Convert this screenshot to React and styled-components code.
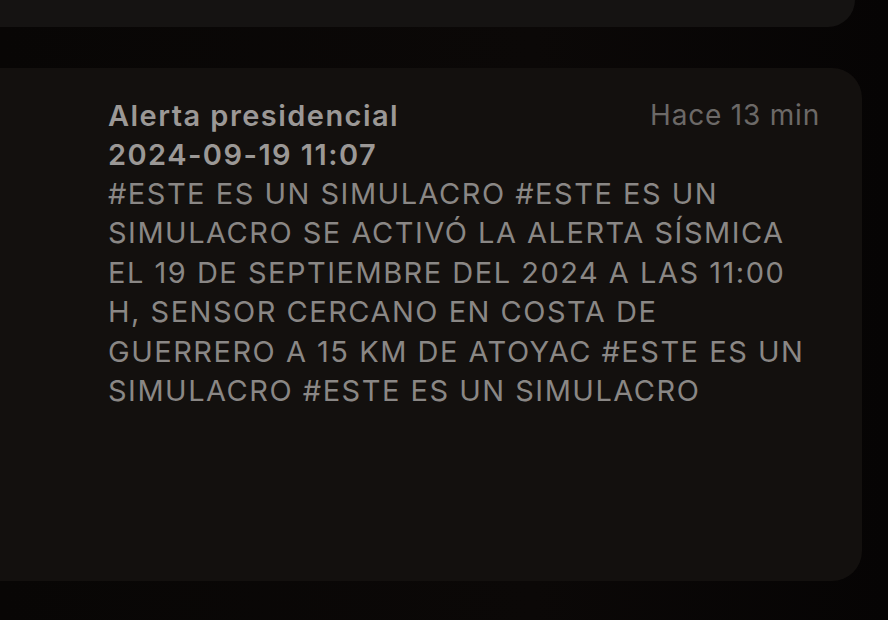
import React from "react";
import styled, { createGlobalStyle } from "styled-components";

const Global = createGlobalStyle`
  html, body { margin: 0; padding: 0; background: #080605; }
  body { width: 888px; height: 620px; overflow: hidden; }
`;

const Screen = styled.div`
  width: 888px;
  height: 620px;
  background: linear-gradient(90deg, #080605 0%, #0b0807 60%, #060404 100%);
  display: flex;
  flex-direction: column;
  overflow: hidden;
`;

const TopCard = styled.div`
  height: 27px;
  width: 855px;
  flex: none;
  background: #151312;
  border-radius: 0 0 34px 0;
`;

const Card = styled.div`
  margin-top: 41px;
  width: 862px;
  height: 513px;
  flex: none;
  background: #13100e;
  border-radius: 0 30px 30px 0;
  padding: 28px 42px 0 108px;
  box-sizing: border-box;
  font-family: Inter, "Noto Sans", sans-serif;
`;

const Header = styled.div`
  display: flex;
  justify-content: space-between;
  align-items: flex-start;
`;

const Title = styled.div`
  color: #9b9896;
  font-weight: 600;
  font-size: 29px;
  line-height: 39px;
  letter-spacing: 1.45px;
`;

const Time = styled.div`
  color: #6c6967;
  font-size: 28px;
  line-height: 39px;
  letter-spacing: 0.8px;
`;

const Body = styled.div`
  color: #8a8785;
  font-size: 29px;
  line-height: 39.4px;
  letter-spacing: 1.5px;
`;

const lines = [
  "#ESTE ES UN SIMULACRO #ESTE ES UN",
  "SIMULACRO SE ACTIVÓ LA ALERTA SÍSMICA",
  "EL 19 DE SEPTIEMBRE DEL 2024 A LAS 11:00",
  "H, SENSOR CERCANO EN COSTA DE",
  "GUERRERO A 15 KM DE ATOYAC #ESTE ES UN",
  "SIMULACRO #ESTE ES UN SIMULACRO",
];

export default function App() {
  return (
    <>
      <Global />
      <Screen>
        <TopCard />
        <Card>
          <Header>
            <Title>
              Alerta presidencial
              <br />
              2024-09-19 11:07
            </Title>
            <Time>Hace 13 min</Time>
          </Header>
          <Body>
            {lines.map((l, i) => (
              <div key={i}>{l}</div>
            ))}
          </Body>
        </Card>
      </Screen>
    </>
  );
}
